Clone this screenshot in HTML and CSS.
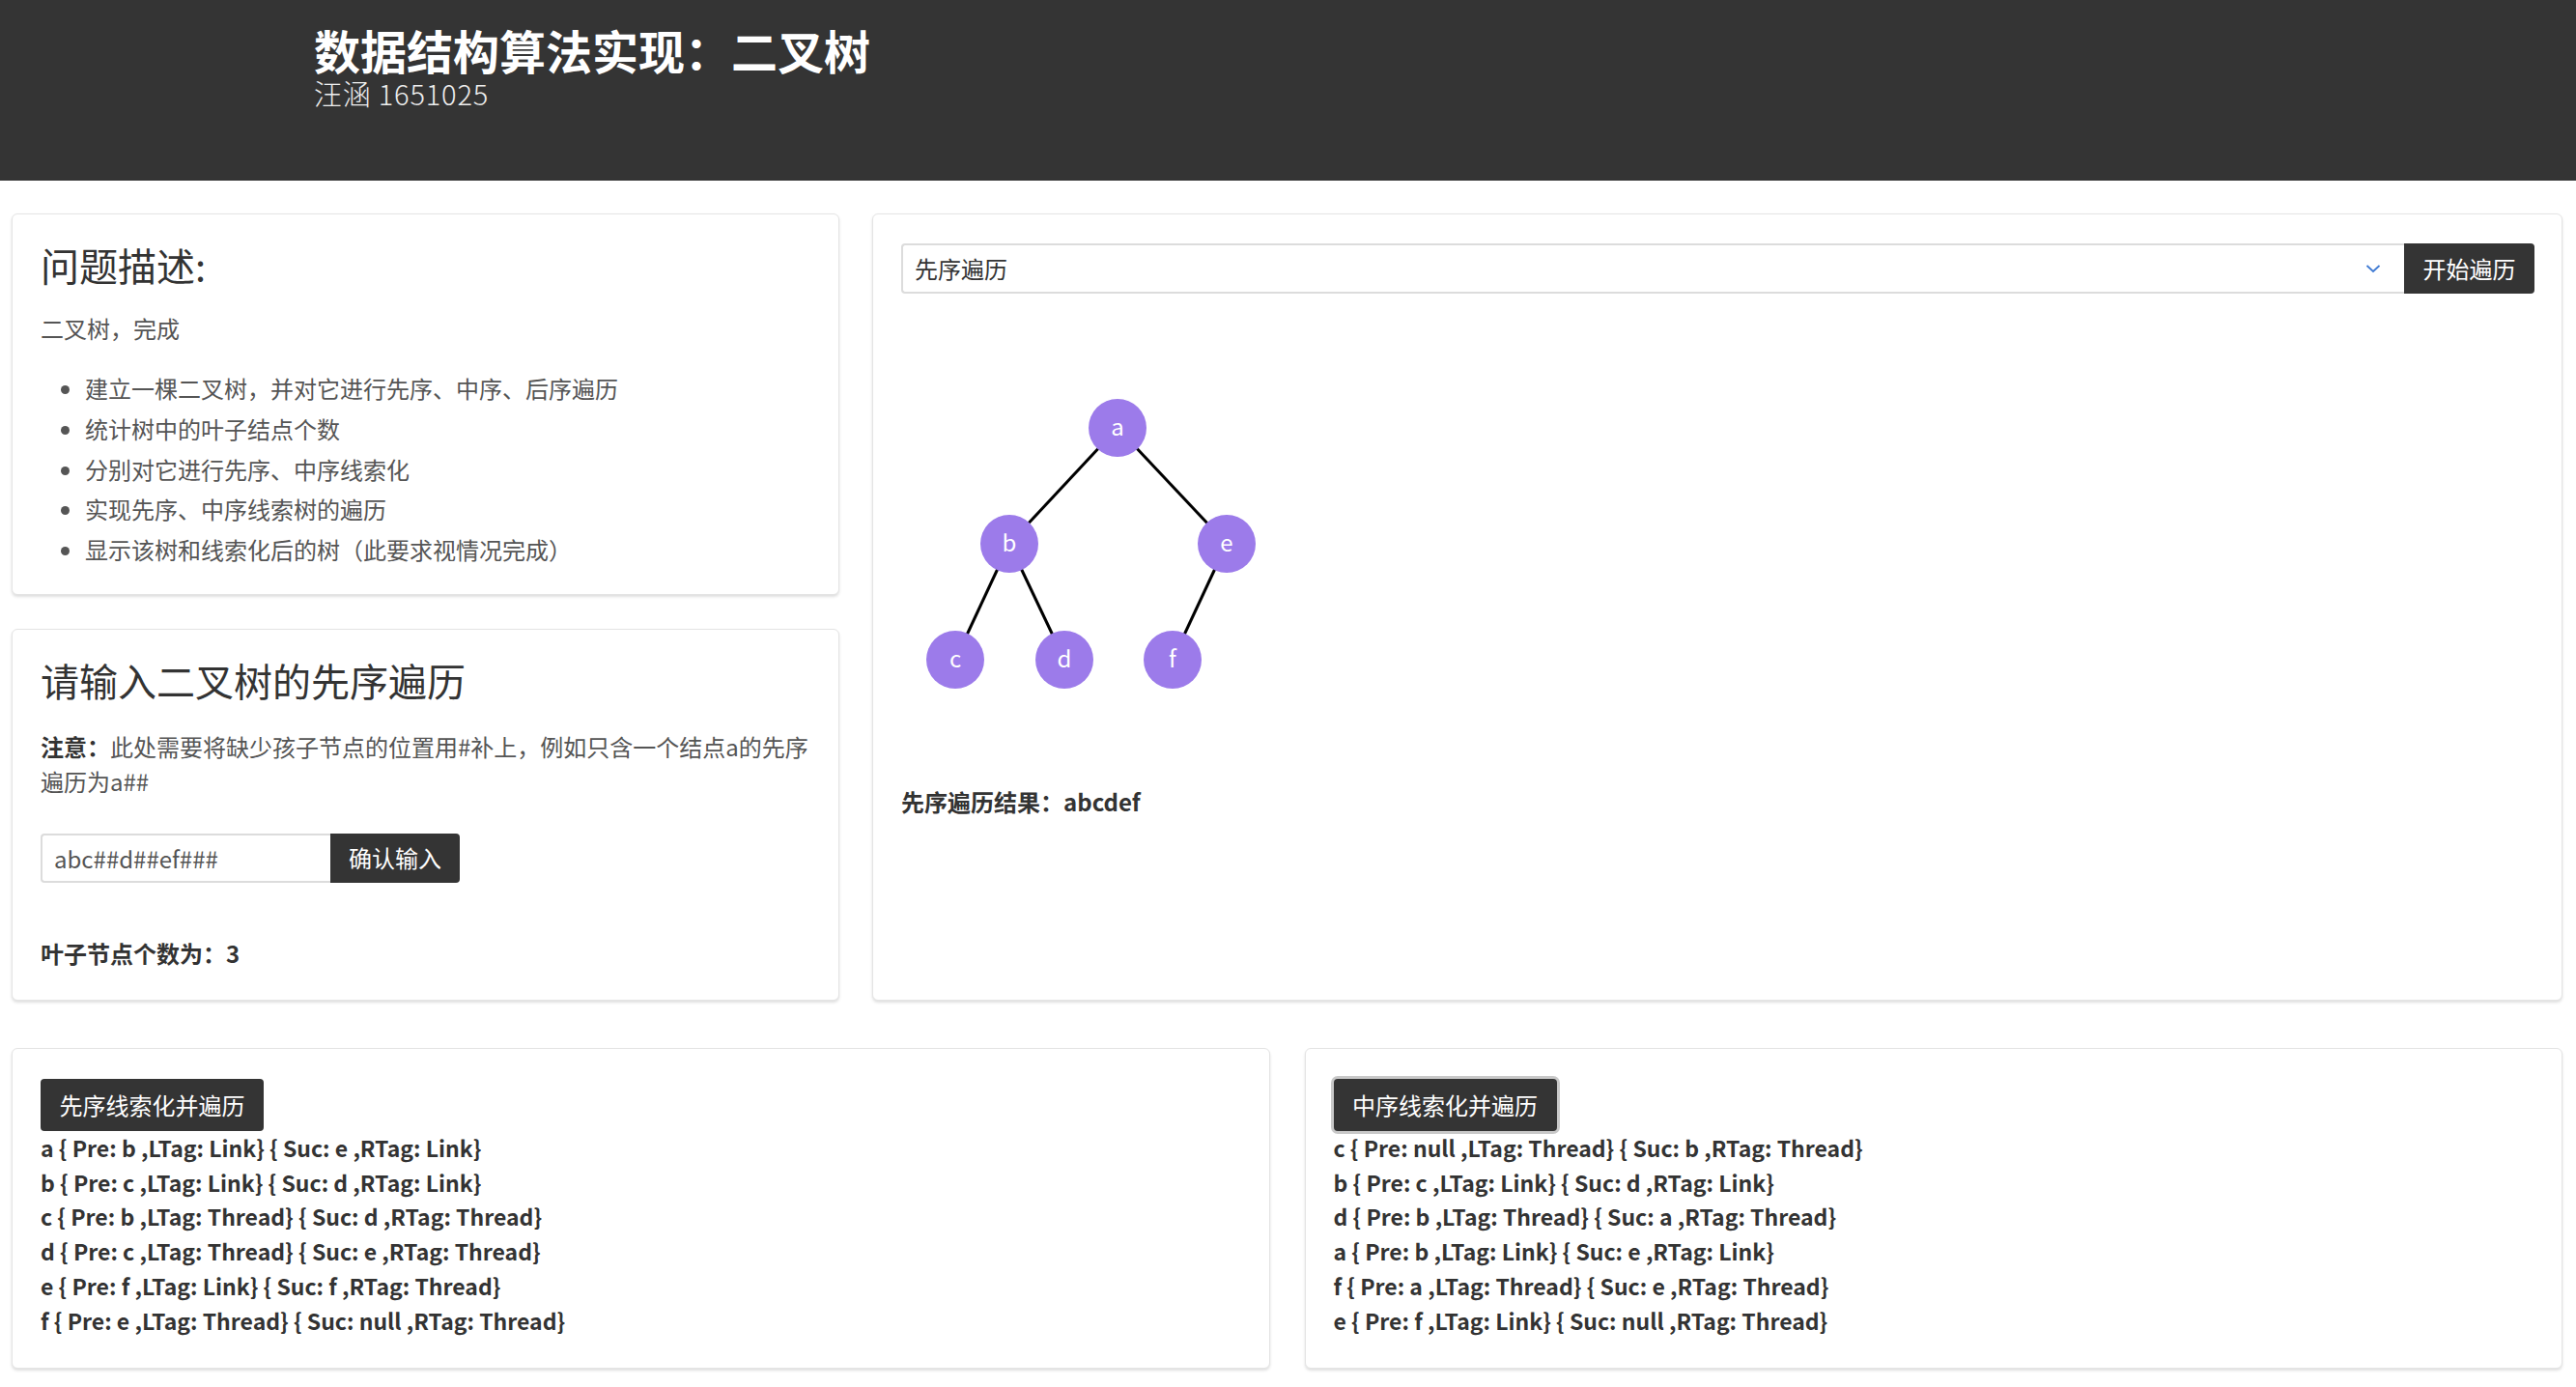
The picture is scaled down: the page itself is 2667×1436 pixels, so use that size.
FILE: index.html
```html
<!DOCTYPE html>
<html lang="zh-CN">
<head>
<meta charset="utf-8">
<title>数据结构算法实现：二叉树</title>
<link rel="stylesheet" href="styles.css">
</head>
<body>
<header class="top">
  <div class="top-inner">
    <h1 class="title">数据结构算法实现：二叉树</h1>
    <div class="subtitle">汪涵 1651025</div>
  </div>
</header>
<main class="page">
  <section class="row-top">
    <div class="col-left">
      <div class="card card-desc">
        <h2 class="card-title">问题描述:</h2>
        <p class="para">二叉树，完成</p>
        <ul class="list">
          <li>建立一棵二叉树，并对它进行先序、中序、后序遍历</li>
          <li>统计树中的叶子结点个数</li>
          <li>分别对它进行先序、中序线索化</li>
          <li>实现先序、中序线索树的遍历</li>
          <li>显示该树和线索化后的树（此要求视情况完成）</li>
        </ul>
      </div>
      <div class="card card-input">
        <h2 class="card-title">请输入二叉树的先序遍历</h2>
        <p class="para note"><strong>注意：</strong>此处需要将缺少孩子节点的位置用#补上，例如只含一个结点a的先序遍历为a##</p>
        <div class="input-group">
          <div class="text-input">abc##d##ef###</div>
          <button class="btn btn-right">确认输入</button>
        </div>
        <p class="strong-line">叶子节点个数为：3</p>
      </div>
    </div>
    <div class="card card-tree">
      <div class="select-group">
        <div class="select">
          <span class="select-text">先序遍历</span>
          <svg class="chevron" width="16" height="10" viewBox="0 0 16 10"><path d="M1.5 2 L8 8 L14.5 2" fill="none" stroke="#3f7ad3" stroke-width="1.8"/></svg>
        </div>
        <button class="btn btn-right">开始遍历</button>
      </div>
      <svg class="tree" width="420" height="508" viewBox="0 0 420 508">
        <g stroke="#000" stroke-width="3">
          <line x1="224" y1="139" x2="112" y2="259"/>
          <line x1="224" y1="139" x2="337" y2="259"/>
          <line x1="112" y1="259" x2="56" y2="379"/>
          <line x1="112" y1="259" x2="169" y2="379"/>
          <line x1="337" y1="259" x2="281" y2="379"/>
        </g>
        <g fill="#9c7bea">
          <circle cx="224" cy="139" r="30"/>
          <circle cx="112" cy="259" r="30"/>
          <circle cx="337" cy="259" r="30"/>
          <circle cx="56" cy="379" r="30"/>
          <circle cx="169" cy="379" r="30"/>
          <circle cx="281" cy="379" r="30"/>
        </g>
        <g class="node-label" fill="#fff" text-anchor="middle">
          <text x="224" y="147">a</text>
          <text x="112" y="267">b</text>
          <text x="337" y="267">e</text>
          <text x="56" y="387">c</text>
          <text x="169" y="387">d</text>
          <text x="281" y="387">f</text>
        </g>
      </svg>
      <p class="strong-line">先序遍历结果：abcdef</p>
    </div>
  </section>
  <section class="row-bottom">
    <div class="card card-thread">
      <button class="btn">先序线索化并遍历</button>
      <div class="lines">
        <div>a { Pre: b ,LTag: Link} { Suc: e ,RTag: Link}</div>
        <div>b { Pre: c ,LTag: Link} { Suc: d ,RTag: Link}</div>
        <div>c { Pre: b ,LTag: Thread} { Suc: d ,RTag: Thread}</div>
        <div>d { Pre: c ,LTag: Thread} { Suc: e ,RTag: Thread}</div>
        <div>e { Pre: f ,LTag: Link} { Suc: f ,RTag: Thread}</div>
        <div>f { Pre: e ,LTag: Thread} { Suc: null ,RTag: Thread}</div>
      </div>
    </div>
    <div class="card card-thread">
      <button class="btn btn-focus">中序线索化并遍历</button>
      <div class="lines">
        <div>c { Pre: null ,LTag: Thread} { Suc: b ,RTag: Thread}</div>
        <div>b { Pre: c ,LTag: Link} { Suc: d ,RTag: Link}</div>
        <div>d { Pre: b ,LTag: Thread} { Suc: a ,RTag: Thread}</div>
        <div>a { Pre: b ,LTag: Link} { Suc: e ,RTag: Link}</div>
        <div>f { Pre: a ,LTag: Thread} { Suc: e ,RTag: Thread}</div>
        <div>e { Pre: f ,LTag: Link} { Suc: null ,RTag: Thread}</div>
      </div>
    </div>
  </section>
</main>
</body>
</html>
```
FILE: styles.css
```css
* { box-sizing: border-box; }
html, body { margin: 0; padding: 0; }
body {
  background: #fff;
  color: #333;
  font-family: "Noto Sans CJK SC", "Noto Sans", sans-serif;
  font-size: 24px;
}
.top {
  background: #343434;
  height: 187px;
}
.top-inner {
  padding: 25px 0 0 325px;
}
.title {
  margin: 0;
  color: #fff;
  font-size: 48px;
  font-weight: 700;
  line-height: 52px;
}
.subtitle {
  margin-top: 2px;
  color: #eee;
  font-size: 29px;
  line-height: 34px;
  font-weight: 300;
  letter-spacing: 0.8px;
}
.page {
  padding: 34px 14px 20px 12px;
}
.row-top {
  display: grid;
  grid-template-columns: 857fr 1750fr;
  column-gap: 34px;
}
.col-left {
  display: flex;
  flex-direction: column;
  gap: 35px;
}
.card {
  background: #fff;
  border: 1px solid #e4e4e4;
  border-radius: 6px;
  box-shadow: 0 2px 3px rgba(0, 0, 0, 0.13);
  padding: 26px 28px 27px 29px;
}
.card-desc { padding-bottom: 25px; }
.card-input { padding-bottom: 30px; }
.card-title {
  margin: 0;
  font-size: 40px;
  font-weight: 400;
  line-height: 52px;
  color: #333;
}
.para {
  margin: 22px 0 0;
  line-height: 36px;
  color: #555;
}
.list {
  margin: 23px 0 0;
  padding-left: 46px;
  color: #555;
  line-height: 41.8px;
}
.note { margin-top: 25px; }
.note strong { color: #333; }
.input-group {
  display: flex;
  margin-top: 36px;
  height: 51px;
}
.text-input {
  width: 300px;
  border: 2px solid #dcdcdc;
  border-right: none;
  border-radius: 4px 0 0 4px;
  padding: 0 12px;
  line-height: 47px;
  color: #555;
}
.btn {
  background: #343434;
  color: #fff;
  border: none;
  border-radius: 4px;
  font-family: inherit;
  font-size: 24px;
  line-height: 36px;
  padding: 9px 20px;
  cursor: pointer;
}
.btn-right {
  border-radius: 0 4px 4px 0;
  padding: 0 19px;
  width: 134px;
}
.strong-line {
  margin: 55px 0 0;
  font-weight: 700;
  line-height: 36px;
  color: #333;
}
.card-tree {
  display: flex;
  flex-direction: column;
  padding-top: 30px;
}
.select-group {
  display: flex;
  height: 52px;
}
.select {
  flex: 1;
  display: flex;
  align-items: center;
  justify-content: space-between;
  border: 2px solid #dcdcdc;
  border-right: none;
  border-radius: 4px 0 0 4px;
  padding: 0 24px 0 12px;
  color: #333;
}
.select-text { line-height: 36px; }
.chevron { display: block; }
.select-group .btn-right { width: 135px; }
.tree { display: block; }
.node-label text {
  font-family: "Noto Sans CJK SC", "Noto Sans", sans-serif;
  font-size: 24px;
}
.card-tree .strong-line { margin-top: 0; }
.row-bottom {
  display: grid;
  grid-template-columns: 1fr 1fr;
  column-gap: 36px;
  margin-top: 49px;
}
.card-thread {
  padding-top: 31px;
  padding-bottom: 31px;
}
.card-thread .btn {
  width: 231px;
  height: 54px;
  padding: 0;
}
.btn-focus {
  box-shadow: 0 0 0 3px #c8c8c8;
}
.lines {
  margin-top: 0;
  font-weight: 700;
  font-size: 23px;
  line-height: 35.7px;
  color: #333;
}
```
